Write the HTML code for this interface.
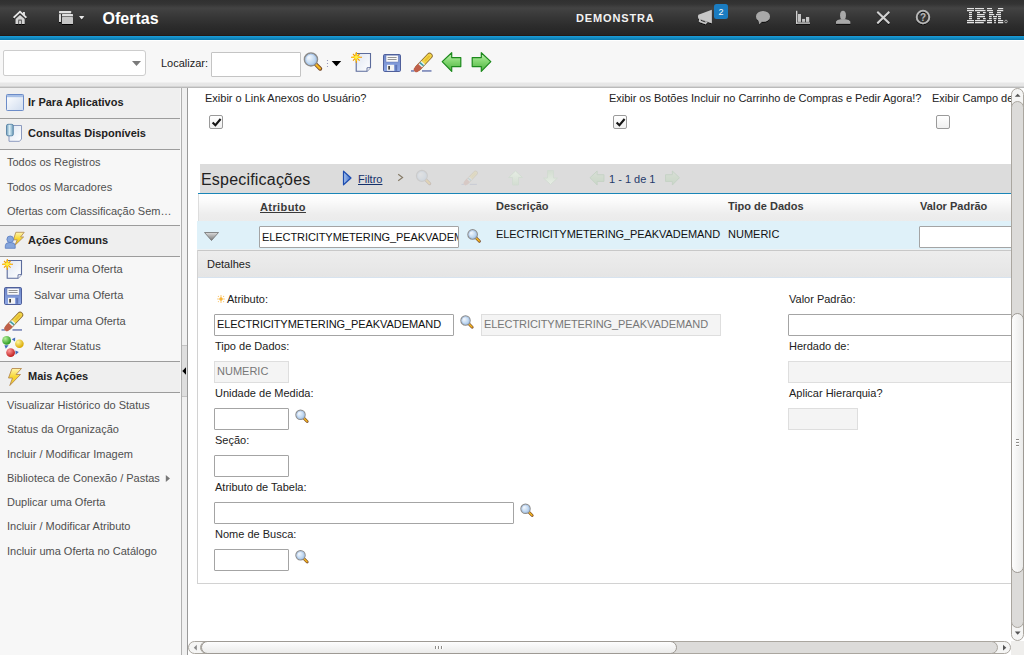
<!DOCTYPE html>
<html><head><meta charset="utf-8">
<style>
*{margin:0;padding:0;box-sizing:border-box}
html,body{width:1024px;height:655px;overflow:hidden;background:#fff;font-family:"Liberation Sans",sans-serif;font-size:11px;color:#222}
.a{position:absolute}
.t{position:absolute;white-space:nowrap;font-size:11px;line-height:13px}
.b{font-weight:bold}
#hdr{left:0;top:0;width:1024px;height:36px;background:linear-gradient(#303030 0,#343434 4px,#434343 8px,#383838 16px,#2c2c2c 26px,#242424 35px);border-bottom:1px solid #231a17}
#blue{left:0;top:36px;width:1024px;height:4px;background:linear-gradient(#1b9dd8,#0b78ab)}
#tb{left:0;top:40px;width:1024px;height:48px;background:linear-gradient(#fff 0,#fff 1px,#f7f7f7 1px,#f7f7f7 42px,#efefef 42px,#efefef 43px,#e7e7e7 43px,#e6e6e6 46px,#d4d4d4 46px,#d4d4d4 47px);border-bottom:1px solid #bababa}
#side{left:0;top:88px;width:182px;height:567px;background:#f7f7f7;border-right:1px solid #b0b0b0}
.sh{position:absolute;left:0;width:180px;background:#efefef;border-bottom:1px solid #9c9c9c}
.si{position:absolute;left:7px;white-space:nowrap;color:#505050;font-size:11px;line-height:13px}
#split{left:182px;top:88px;width:6px;height:567px;background:#f0f0f0;border-right:1px solid #999}
#content{left:188px;top:88px;width:823px;height:553px;background:#fff;overflow:hidden}
.inp{position:absolute;background:#fff;border:1px solid #a4a4a4;border-radius:1px}
.ro{position:absolute;background:#f4f4f4;border:1px solid #dedede}
.cb{position:absolute;width:14px;height:14px;border:1px solid #9a9a9a;border-radius:2px;background:linear-gradient(#fff,#f0f0f0)}
.lbl{position:absolute;white-space:nowrap;color:#222;font-size:11px;line-height:13px}
</style></head><body>
<svg width="0" height="0" style="position:absolute">
<defs>
<linearGradient id="gBlueWin" x1="0" y1="0" x2="1" y2="1"><stop offset="0" stop-color="#ffffff"/><stop offset="1" stop-color="#cfdcef"/></linearGradient>
<linearGradient id="gDoc" x1="0" y1="0" x2="1" y2="1"><stop offset="0" stop-color="#dfe6f2"/><stop offset="1" stop-color="#ffffff"/></linearGradient>
<linearGradient id="gFloppy" x1="0" y1="0" x2="0" y2="1"><stop offset="0" stop-color="#6d86c8"/><stop offset="1" stop-color="#8fa9e6"/></linearGradient>
<linearGradient id="gGreen" x1="0" y1="0" x2="0" y2="1"><stop offset="0" stop-color="#c9f2bb"/><stop offset="0.45" stop-color="#86d874"/><stop offset="1" stop-color="#4cb23e"/></linearGradient>
<linearGradient id="gFadeGreen" x1="0" y1="0" x2="0" y2="1"><stop offset="0" stop-color="#e6ede4"/><stop offset="1" stop-color="#d3ddd1"/></linearGradient>
<radialGradient id="gLens" cx="0.35" cy="0.35" r="0.7"><stop offset="0" stop-color="#f4f8fd"/><stop offset="0.6" stop-color="#c5dbf2"/><stop offset="1" stop-color="#a9c8ea"/></radialGradient>
<linearGradient id="gBolt" x1="0" y1="0" x2="0" y2="1"><stop offset="0" stop-color="#fff6b0"/><stop offset="0.5" stop-color="#f7d631"/><stop offset="1" stop-color="#f0c830"/></linearGradient>
<linearGradient id="gCyl" x1="0" y1="0" x2="1" y2="0"><stop offset="0" stop-color="#6d9ab8"/><stop offset="0.45" stop-color="#d8eef6"/><stop offset="1" stop-color="#6f9cb8"/></linearGradient>
<radialGradient id="gBallG" cx="0.35" cy="0.3" r="0.7"><stop offset="0" stop-color="#b6f09a"/><stop offset="1" stop-color="#2a9a20"/></radialGradient>
<radialGradient id="gBallY" cx="0.35" cy="0.3" r="0.7"><stop offset="0" stop-color="#fff7a0"/><stop offset="1" stop-color="#d9a800"/></radialGradient>
<radialGradient id="gBallR" cx="0.35" cy="0.3" r="0.7"><stop offset="0" stop-color="#ff9a9a"/><stop offset="1" stop-color="#c02020"/></radialGradient>
<g id="iMag">
<path d="M7.9 7.9 L11.3 11.3" stroke="#7a4a28" stroke-width="2.6" stroke-linecap="round"/>
<path d="M8.1 8.1 L11.1 11.1" stroke="#f6b820" stroke-width="1.5" stroke-linecap="round"/>
<circle cx="5.1" cy="5.1" r="4.3" fill="url(#gLens)" stroke="#8d8d8d" stroke-width="1.1"/>
<circle cx="5.1" cy="5.1" r="3.5" fill="none" stroke="#a6c4ea" stroke-width="0.6"/>
</g>
<g id="iNewDoc">
<path d="M5.2 1.5 H19.5 V15.5 L16 19.3 H5.2 Z" fill="url(#gDoc)" stroke="#5b6b9b" stroke-width="1.1"/>
<path d="M16 19.3 L16 15.8 L19.5 15.5" fill="#fff" stroke="#5b6b9b" stroke-width="0.9"/>
<path d="M5.3 0 V11 M0 5.3 H11 M2 2 L8.6 8.6 M8.6 2 L2 8.6" stroke="#f59a00" stroke-width="1.1"/>
<path d="M5.3 1.5 V9 M1.5 5.3 H9" stroke="#ffd000" stroke-width="1.6"/>
<circle cx="5.3" cy="5.3" r="1.8" fill="#ffef40"/>
</g>
<g id="iSave">
<rect x="0.5" y="0.5" width="17" height="17" rx="1.2" fill="url(#gFloppy)" stroke="#4f5f9a" stroke-width="1"/>
<rect x="3" y="1.2" width="12.2" height="6.8" fill="#fafafa" stroke="#6a7ab0" stroke-width="0.5"/>
<rect x="4.6" y="3.1" width="9" height="0.9" fill="#8a8a8a"/>
<rect x="4.6" y="5.1" width="9" height="0.9" fill="#8a8a8a"/>
<rect x="4" y="10.8" width="7" height="6" fill="#f4f4f4"/>
<rect x="5.3" y="12" width="1.6" height="3.6" fill="#333"/>
<rect x="12.2" y="10.8" width="2" height="6" fill="#5e74b4"/>
</g>
<g id="iErase">
<rect x="0" y="17.8" width="3.5" height="1.3" fill="#5a6aa8"/>
<rect x="11" y="17.8" width="9.5" height="1.3" fill="#5a6aa8"/>
<path d="M7.2 15.3 L18.6 3.4" stroke="#8a6a30" stroke-width="6.2" stroke-linecap="round"/>
<path d="M7.2 15.3 L18.6 3.4" stroke="#f2d54a" stroke-width="4.6" stroke-linecap="round"/>
<path d="M14 8.4 L18.6 3.4" stroke="#e8c030" stroke-width="2" />
<path d="M5.6 16.9 L9.6 12.7" stroke="#c0604a" stroke-width="5.6" stroke-linecap="round"/>
<path d="M9.2 13.3 L12.2 10.1" stroke="#e6f2f2" stroke-width="4.8"/>
<path d="M10.2 12.3 L11.2 11.1" stroke="#3a9aa0" stroke-width="4.8"/>
</g>
<g id="iArrowL">
<path d="M0.7 9.6 L10.2 0.7 V5.6 H19.3 V14.6 H10.2 V19.4 Z" fill="url(#gGreen)" stroke="#1d8a1d" stroke-width="1.2" stroke-linejoin="round"/>
</g>
<g id="iFadeUp">
<path d="M7.5 0.5 L14.5 7 H10.5 V14.5 H4.5 V7 H0.5 Z" fill="url(#gFadeGreen)" stroke="#d0dbd0" stroke-width="0.8"/>
</g>
</defs></svg>
<!-- header -->
<div id="hdr" class="a"></div>
<div id="blue" class="a"></div>
<svg class="a" style="left:0;top:0" width="1024" height="36" viewBox="0 0 1024 36">
<defs>
<filter id="sh" x="-20%" y="-20%" width="140%" height="150%"><feDropShadow dx="0" dy="1" stdDeviation="0.3" flood-color="#000" flood-opacity="0.9"/></filter>
<pattern id="stripes" width="4" height="2" patternUnits="userSpaceOnUse" y="0.5"><rect width="4" height="1.15" fill="#e8e8e8"/></pattern>
</defs>
<g filter="url(#sh)">
<path d="M13.6 17.6 L20 11.6 L26.4 17.6" fill="none" stroke="#e8e8e8" stroke-width="1.7" stroke-linejoin="miter"/>
<rect x="23" y="12" width="1.9" height="3.6" fill="#e0e0e0"/>
<path d="M15.6 19 L20 14.9 L24.6 19 L24.6 24 L21.8 24 L21.8 19.6 L18.3 19.6 L18.3 24 L15.6 24 Z" fill="#d4d4d4"/>
<rect x="19.1" y="20.6" width="2" height="3.4" fill="#d0d0d0"/>
<rect x="59" y="11" width="12.2" height="2.2" rx="0.6" fill="#e0e0e0"/>
<rect x="59" y="14" width="2" height="8" rx="0.5" fill="#d8d8d8"/>
<rect x="62" y="14" width="11" height="2.2" rx="0.5" fill="#e0e0e0"/>
<rect x="62" y="17" width="11" height="7" rx="0.6" fill="#c6c6c6"/>
<path d="M79 16 L84.3 16 L81.65 19.2 Z" fill="#e8e8e8"/>
<path d="M698.4 14.8 L711.8 9.7 L711.8 23.2 L698.4 18.4 Q697.5 16.6 698.4 14.8 Z" fill="#c8c8c8"/>
<path d="M699.2 18.8 L707.6 21.9 L705.6 24.3 L698.8 21.7 Z" fill="#c8c8c8"/>
<path d="M700.8 20.3 L705.4 22" stroke="#2a2a2a" stroke-width="1"/>
<ellipse cx="763" cy="16.4" rx="7" ry="5.4" fill="#a9a9a9"/>
<path d="M758.5 20 L762 21.5 L759.3 24.2 Z" fill="#a9a9a9"/>
<rect x="796" y="10.8" width="1.3" height="12.9" fill="#cfcfcf"/>
<rect x="796" y="22.5" width="14" height="1.2" fill="#cfcfcf"/>
<rect x="798" y="14" width="3" height="7.8" fill="#c4c4c4"/>
<rect x="802.1" y="18.9" width="3" height="2.9" fill="#c4c4c4"/>
<rect x="806" y="17" width="3.2" height="4.8" fill="#c4c4c4"/>
<ellipse cx="843" cy="15.3" rx="2.9" ry="4.5" fill="#a8a8a8"/>
<path d="M836 23.7 L836 21.5 Q837 19.6 840.5 19.2 L845.5 19.2 Q849.3 19.6 850.3 21.5 L850.3 23.7 Z" fill="#a8a8a8"/>
<path d="M877.3 11.7 L889.3 23.3 M889.3 11.7 L877.3 23.3" stroke="#d2d2d2" stroke-width="1.9"/>
<circle cx="923" cy="17" r="6.3" fill="none" stroke="#b8b8b8" stroke-width="1.8"/>
</g>
<text x="923" y="20.6" text-anchor="middle" font-family="Liberation Sans" font-weight="bold" font-size="10" fill="#b8b8b8">?</text>
<rect x="714" y="4" width="14" height="15" rx="2.5" fill="#1a7cc1"/>
<text x="721" y="15" text-anchor="middle" font-family="Liberation Sans" font-size="9" fill="#fff">2</text>
<g fill="#e4e4e4" filter="url(#sh)"><rect x="967" y="8" width="7.0" height="1.15"/><rect x="975" y="8" width="9.0" height="1.15"/><rect x="987" y="8" width="5.0" height="1.15"/><rect x="998" y="8" width="5.2" height="1.15"/><rect x="967" y="10" width="7.0" height="1.15"/><rect x="975" y="10" width="10.5" height="1.15"/><rect x="987" y="10" width="6.0" height="1.15"/><rect x="997" y="10" width="6.2" height="1.15"/><rect x="969" y="12" width="3.0" height="1.15"/><rect x="977" y="12" width="3.0" height="1.15"/><rect x="983" y="12" width="2.7" height="1.15"/><rect x="989" y="12" width="4.0" height="1.15"/><rect x="997" y="12" width="4.0" height="1.15"/><rect x="969" y="14" width="3.0" height="1.15"/><rect x="977" y="14" width="7.6" height="1.15"/><rect x="989" y="14" width="5.2" height="1.15"/><rect x="996" y="14" width="5.0" height="1.15"/><rect x="969" y="16" width="3.0" height="1.15"/><rect x="977" y="16" width="8.0" height="1.15"/><rect x="989" y="16" width="2.7" height="1.15"/><rect x="993" y="16" width="4.0" height="1.15"/><rect x="998" y="16" width="3.0" height="1.15"/><rect x="969" y="18" width="3.0" height="1.15"/><rect x="977" y="18" width="3.0" height="1.15"/><rect x="983" y="18" width="2.7" height="1.15"/><rect x="989" y="18" width="2.7" height="1.15"/><rect x="993.5" y="18" width="3.0" height="1.15"/><rect x="998" y="18" width="3.0" height="1.15"/><rect x="967" y="20" width="7.0" height="1.15"/><rect x="975" y="20" width="10.7" height="1.15"/><rect x="987" y="20" width="5.0" height="1.15"/><rect x="994" y="20" width="2.0" height="1.15"/><rect x="998" y="20" width="5.2" height="1.15"/><rect x="967" y="22" width="7.0" height="1.15"/><rect x="975" y="22" width="8.8" height="1.15"/><rect x="987" y="22" width="5.0" height="1.15"/><rect x="994.2" y="22" width="1.6" height="1.15"/><rect x="998" y="22" width="5.2" height="1.15"/></g>
<circle cx="1006" cy="21.5" r="1.3" fill="none" stroke="#d0d0d0" stroke-width="0.7"/>
</svg>

<div class="t b" style="left:102.6px;top:10px;font-size:16px;line-height:18px;color:#fff">Ofertas</div>
<div class="t b" style="left:576px;top:12px;font-size:11px;line-height:13px;letter-spacing:0.85px;color:#f2f2f2">DEMONSTRA</div>

<!-- toolbar -->
<div id="tb" class="a"></div>
<div class="a" style="left:3px;top:50px;width:143px;height:26px;background:#fff;border:1px solid #cdcdcd;border-radius:2px 3px 3px 2px"></div>
<div class="t" style="left:161px;top:57px;color:#1c1c1c">Localizar:</div>
<div class="inp" style="left:211px;top:52px;width:90px;height:25px;border-color:#c4c4c4"></div>

<svg class="a" style="left:0;top:40px" width="1024" height="48" viewBox="0 40 1024 48">
<path d="M132 61 L141 61 L136.5 66 Z" fill="#7a7a7a"/>
<use href="#iMag" transform="translate(303.3 51.8) scale(1.5)"/>
<circle cx="327.5" cy="60.5" r="0.6" fill="#8a8ab0"/><circle cx="327.5" cy="63.5" r="0.6" fill="#8a8ab0"/><circle cx="327.5" cy="66.5" r="0.6" fill="#8a8ab0"/>
<path d="M331.7 61 L341.2 61 L336.4 66.2 Z" fill="#000"/>
<use href="#iNewDoc" x="351" y="52"/>
<use href="#iSave" x="383" y="54"/>
<use href="#iErase" x="411" y="52.5"/>
<use href="#iArrowL" x="441.5" y="52"/>
<use href="#iArrowL" transform="translate(491.5 52) scale(-1 1)"/>
</svg>
<!-- sidebar -->
<div id="side" class="a">
<div class="sh" style="top:0;height:31px"></div>
<div class="sh" style="top:31px;height:31px"></div>
<div class="sh" style="top:138px;height:31px"></div>
<div class="sh" style="top:274px;height:31px"></div>
<div class="a" style="left:0;top:137px;width:180px;height:1px;background:#9c9c9c"></div>
<div class="a" style="left:0;top:273px;width:180px;height:1px;background:#9c9c9c"></div>
</div>
<div class="t b" style="left:28px;top:96px;color:#222">Ir Para Aplicativos</div>
<div class="t b" style="left:28px;top:127px;color:#222">Consultas Disponíveis</div>
<div class="si" style="top:156px">Todos os Registros</div>
<div class="si" style="top:181px">Todos os Marcadores</div>
<div class="si" style="top:205px">Ofertas com Classificação Sem…</div>
<div class="t b" style="left:28px;top:234px;color:#222">Ações Comuns</div>
<div class="si" style="left:34px;top:263px">Inserir uma Oferta</div>
<div class="si" style="left:34px;top:289px">Salvar uma Oferta</div>
<div class="si" style="left:34px;top:315px">Limpar uma Oferta</div>
<div class="si" style="left:34px;top:340px">Alterar Status</div>
<div class="t b" style="left:28px;top:370px;color:#222">Mais Ações</div>
<div class="si" style="top:399px">Visualizar Histórico do Status</div>
<div class="si" style="top:423px">Status da Organização</div>
<div class="si" style="top:448px">Incluir / Modificar Imagem</div>
<div class="si" style="top:472px">Biblioteca de Conexão / Pastas</div>
<div class="si" style="top:496px">Duplicar uma Oferta</div>
<div class="si" style="top:520px">Incluir / Modificar Atributo</div>
<div class="si" style="top:545px">Incluir uma Oferta no Catálogo</div>
<div id="split" class="a"></div>
<div class="a" style="left:182px;top:345px;width:5px;height:52px;background:#dedede;border-top:1px solid #c4c4c4;border-bottom:1px solid #c4c4c4"></div>
<svg class="a" style="left:182px;top:366px" width="5" height="10"><path d="M0.3 5 L4 1.3 L4 8.7 Z" fill="#000"/></svg>
<svg class="a" style="left:164px;top:474px" width="8" height="9"><path d="M1.8 1 L6 4.5 L1.8 8 Z" fill="#777"/></svg>
<svg class="a" style="left:0;top:88px" width="182" height="300" viewBox="0 88 182 300">
<rect x="6.5" y="94.5" width="17" height="16" rx="0.8" fill="url(#gBlueWin)" stroke="#6c8cc8" stroke-width="1"/>
<rect x="7" y="95" width="16" height="2.2" fill="#a8c0e6"/>
<path d="M9 125.5 H21.5 V139 L19.5 141.3 H9 Z" fill="url(#gDoc)" stroke="#8090b8" stroke-width="0.9"/>
<rect x="6.5" y="124.3" width="6.8" height="11.5" rx="1.5" fill="url(#gCyl)" stroke="#4a7aa0" stroke-width="0.8"/>
<path d="M15.8 232.3 H24.2 L20.6 237 H23.6 L15 245.2 L17.2 239.8 H13.4 Z" fill="url(#gBolt)" stroke="#b0884a" stroke-width="0.8" stroke-linejoin="round"/>
<circle cx="10.2" cy="239.3" r="3.3" fill="#86a6dc" stroke="#5a7cc0" stroke-width="0.8"/>
<path d="M5.3 248.3 V245.8 Q5.5 242.6 9 242.6 H11.5 Q15 242.6 15.2 245.8 V248.3 Z" fill="#86a6dc" stroke="#5a7cc0" stroke-width="0.8"/>
<use href="#iNewDoc" x="2" y="259"/>
<use href="#iSave" x="4" y="287"/>
<use href="#iErase" x="1.5" y="311.5"/>
<circle cx="6.6" cy="340.4" r="4.4" fill="url(#gBallG)"/>
<circle cx="19.4" cy="343.8" r="4.3" fill="url(#gBallY)"/>
<circle cx="10.6" cy="352.6" r="4.4" fill="url(#gBallR)"/>
<path d="M11.8 339.2 L15.2 337.4 L15 341.4 Z M4.4 345.2 L8.6 345.2 L5.8 348.8 Z M15.4 350.6 L18.8 352 L15.6 354.8 Z" fill="#3f6ab8"/>
<path d="M12 368.5 H21.5 L16 374.5 H20.5 L9.8 385.5 L12.5 378 H8.5 Z" fill="url(#gBolt)" stroke="#b58a50" stroke-width="0.9" stroke-linejoin="round"/>
</svg>


<!-- content -->
<div id="content" class="a"></div>
<div class="lbl" style="left:205px;top:92px">Exibir o Link Anexos do Usuário?</div>
<div class="lbl" style="left:609px;top:92px;letter-spacing:-0.03px">Exibir os Botões Incluir no Carrinho de Compras e Pedir Agora!?</div>
<div class="lbl" style="left:932px;top:92px">Exibir Campo de Fornecedor?</div>
<div class="cb" style="left:209px;top:115px"><svg width="14" height="14"><path d="M2.6 6.4 L5.4 9.2 L10.6 3" fill="none" stroke="#151515" stroke-width="2.1"/></svg></div>
<div class="cb" style="left:613px;top:115px"><svg width="14" height="14"><path d="M2.6 6.4 L5.4 9.2 L10.6 3" fill="none" stroke="#151515" stroke-width="2.1"/></svg></div>
<div class="cb" style="left:936px;top:115px"></div>
<!-- especificacoes bar -->
<div class="a" style="left:200px;top:164px;width:811px;height:29px;background:#dcdcdc"></div>
<div class="a" style="left:198px;top:193px;width:813px;height:1px;background:#1a86b8"></div>
<div class="t" style="left:201px;top:171px;font-size:16px;line-height:18px;color:#222;letter-spacing:0.2px">Especificações</div>
<div class="t" style="left:358px;top:173px;color:#14306a;text-decoration:underline">Filtro</div>
<div class="t" style="left:609px;top:173px;color:#263b6b">1 - 1 de 1</div>
<!-- table header -->
<div class="a" style="left:198px;top:194px;width:813px;height:27px;background:linear-gradient(#fff 0,#fbfbfb 25%,#ededed 75%,#ebebeb 100%);border-left:1px solid #ddd"></div>
<div class="t b" style="left:260px;top:201px;color:#3a3a3a;text-decoration:underline;letter-spacing:0.4px">Atributo</div>
<div class="t b" style="left:496px;top:200px;color:#3a3a3a">Descrição</div>
<div class="t b" style="left:728px;top:200px;color:#3a3a3a">Tipo de Dados</div>
<div class="t b" style="left:920px;top:200px;color:#3a3a3a">Valor Padrão</div>
<!-- row -->
<div class="a" style="left:197px;top:221px;width:814px;height:30px;background:#dff1f9;border-bottom:1px solid #c8c8c8;box-shadow:inset 0 -1px 0 #edf1f3"></div>
<div class="inp" style="left:259px;top:226px;width:200px;height:22px;overflow:hidden"><div class="t" style="left:2px;top:4px;color:#111;letter-spacing:-0.08px">ELECTRICITYMETERING_PEAKVADEMAND</div></div>
<div class="t" style="left:496px;top:228px;color:#111;letter-spacing:-0.08px">ELECTRICITYMETERING_PEAKVADEMAND</div>
<div class="t" style="left:728px;top:228px;color:#111">NUMERIC</div>
<div class="inp" style="left:919px;top:226px;width:100px;height:22px"></div>
<!-- detalhes -->
<div class="a" style="left:197px;top:250px;width:830px;height:334px;border-left:1px solid #d2d2d2;border-bottom:1px solid #d2d2d2"></div>
<div class="a" style="left:198px;top:251px;width:813px;height:27px;background:linear-gradient(#ededed,#e5e5e5);border-bottom:1px solid #d7e3ef"></div>
<div class="lbl" style="left:207px;top:258px">Detalhes</div>
<div class="lbl" style="left:227px;top:293px">Atributo:</div>
<div class="inp" style="left:214px;top:314px;width:240px;height:22px"></div>
<div class="t" style="left:217px;top:318px;color:#111;letter-spacing:-0.08px">ELECTRICITYMETERING_PEAKVADEMAND</div>
<div class="ro" style="left:481px;top:314px;width:240px;height:22px"></div>
<div class="t" style="left:484px;top:318px;color:#777;letter-spacing:-0.08px">ELECTRICITYMETERING_PEAKVADEMAND</div>
<div class="lbl" style="left:215px;top:340px">Tipo de Dados:</div>
<div class="ro" style="left:214px;top:361px;width:75px;height:22px"></div>
<div class="t" style="left:217px;top:365px;color:#777">NUMERIC</div>
<div class="lbl" style="left:215px;top:387px">Unidade de Medida:</div>
<div class="inp" style="left:214px;top:408px;width:75px;height:22px"></div>
<div class="lbl" style="left:215px;top:434px">Seção:</div>
<div class="inp" style="left:214px;top:455px;width:75px;height:22px"></div>
<div class="lbl" style="left:215px;top:481px">Atributo de Tabela:</div>
<div class="inp" style="left:214px;top:502px;width:300px;height:22px"></div>
<div class="lbl" style="left:215px;top:528px">Nome de Busca:</div>
<div class="inp" style="left:214px;top:549px;width:75px;height:22px"></div>
<div class="lbl" style="left:789px;top:293px">Valor Padrão:</div>
<div class="inp" style="left:788px;top:314px;width:240px;height:22px"></div>
<div class="lbl" style="left:789px;top:340px">Herdado de:</div>
<div class="ro" style="left:788px;top:361px;width:240px;height:22px"></div>
<div class="lbl" style="left:789px;top:387px">Aplicar Hierarquia?</div>
<div class="ro" style="left:788px;top:408px;width:70px;height:22px"></div>
<svg class="a" style="left:188px;top:88px" width="836" height="567" viewBox="188 88 836 567">
<defs>
<linearGradient id="gTri" x1="0" y1="0" x2="0" y2="1"><stop offset="0" stop-color="#dcdcdc"/><stop offset="1" stop-color="#777"/></linearGradient>
<linearGradient id="gBlueTri" x1="0" y1="0" x2="1" y2="0"><stop offset="0" stop-color="#a8c4ee"/><stop offset="1" stop-color="#3a6ac8"/></linearGradient>
</defs>
<path d="M343.5 171.2 L351 178 L343.5 184.8 Z" fill="url(#gBlueTri)" stroke="#1c4cb0" stroke-width="1.2" stroke-linejoin="round"/>
<path d="M398.2 174.2 L402.6 177.5 L398.2 180.8" fill="none" stroke="#857a66" stroke-width="1.1"/>
<g opacity="0.2"><use href="#iMag" transform="translate(415.5 169.5) scale(1.25)"/></g>
<g opacity="0.15"><use href="#iErase" transform="translate(461.5 170.5) scale(0.75)"/></g>
<use href="#iFadeUp" x="508" y="170.5"/>
<use href="#iFadeUp" transform="translate(543 185) scale(1 -1)"/>
<g opacity="0.12"><use href="#iArrowL" transform="translate(589.5 170.5) scale(0.75)"/></g>
<g opacity="0.12"><use href="#iArrowL" transform="translate(680 170.5) scale(-0.75 0.75)"/></g>
<path d="M204.5 232.5 L218.5 232.5 L211.5 240.5 Z" fill="url(#gTri)" stroke="#6f6f6f" stroke-width="0.8" stroke-linejoin="round"/>
<use href="#iMag" transform="translate(467 228.8) scale(1.1)"/>
<path d="M221 295 V303 M217 299 H225" stroke="#fbd18a" stroke-width="1.2"/>
<g fill="#f9c870"><circle cx="218.4" cy="296.4" r="0.6"/><circle cx="223.6" cy="296.4" r="0.6"/><circle cx="218.4" cy="301.6" r="0.6"/><circle cx="223.6" cy="301.6" r="0.6"/></g>
<circle cx="221" cy="299" r="1.7" fill="#f9b436"/>
<use href="#iMag" transform="translate(460 315) scale(1.08)"/>
<use href="#iMag" transform="translate(295 409.3) scale(1.08)"/>
<use href="#iMag" transform="translate(520 503.3) scale(1.08)"/>
<use href="#iMag" transform="translate(295 549.8) scale(1.08)"/>
</svg>
<!-- scrollbars -->
<div class="a" style="left:1011px;top:88px;width:13px;height:553px;background:#fff"></div>
<div class="a" style="left:1011px;top:88px;width:13px;height:553px;background:#f5f5f4;border:1px solid #aaa69f;border-radius:6.5px"></div>
<div class="a" style="left:1011px;top:101px;width:13px;height:527px;background:#dcdbd9;border:1px solid #aaa69f;border-radius:6.5px"></div>
<div class="a" style="left:1011px;top:313px;width:13px;height:260px;background:linear-gradient(90deg,#fdfdfd,#ebebea);border:1px solid #9e9a94;border-radius:6.5px"></div>
<svg class="a" style="left:1011px;top:88px" width="13" height="553"><path d="M3.8 8.8 L9.6 8.8 L6.7 5.8 Z" fill="#555"/><path d="M3.8 543.5 L9.6 543.5 L6.7 546.8 Z" fill="#555"/>
<g fill="#8e8c88"><rect x="5" y="351" width="3" height="1"/><rect x="5" y="354" width="3" height="1"/><rect x="5" y="357" width="3" height="1"/></g><g fill="#fff"><rect x="5" y="352" width="3" height="1"/><rect x="5" y="355" width="3" height="1"/><rect x="5" y="358" width="3" height="1"/></g></svg>
<div class="a" style="left:1011px;top:641px;width:13px;height:14px;background:#efeeec"></div>
<div class="a" style="left:188px;top:641px;width:823px;height:14px;background:#fff"></div>
<div class="a" style="left:188px;top:641px;width:823px;height:13px;background:#f5f5f4;border:1px solid #aaa69f;border-radius:6.5px"></div>
<div class="a" style="left:200px;top:641px;width:798px;height:13px;background:#dcdbd9;border:1px solid #aaa69f;border-radius:6.5px"></div>
<div class="a" style="left:201px;top:641px;width:476px;height:13px;background:linear-gradient(#fdfdfd,#ebebea);border:1px solid #9e9a94;border-radius:6.5px"></div>
<svg class="a" style="left:188px;top:641px" width="823" height="13"><path d="M8.8 3.8 L8.8 9.6 L5.8 6.7 Z" fill="#888"/><path d="M815 3.8 L815 9.6 L818.3 6.7 Z" fill="#555"/>
<g fill="#8e8c88"><rect x="247" y="5" width="1" height="3"/><rect x="250" y="5" width="1" height="3"/><rect x="253" y="5" width="1" height="3"/></g><g fill="#fff"><rect x="248" y="5" width="1" height="3"/><rect x="251" y="5" width="1" height="3"/><rect x="254" y="5" width="1" height="3"/></g></svg>
</body></html>
